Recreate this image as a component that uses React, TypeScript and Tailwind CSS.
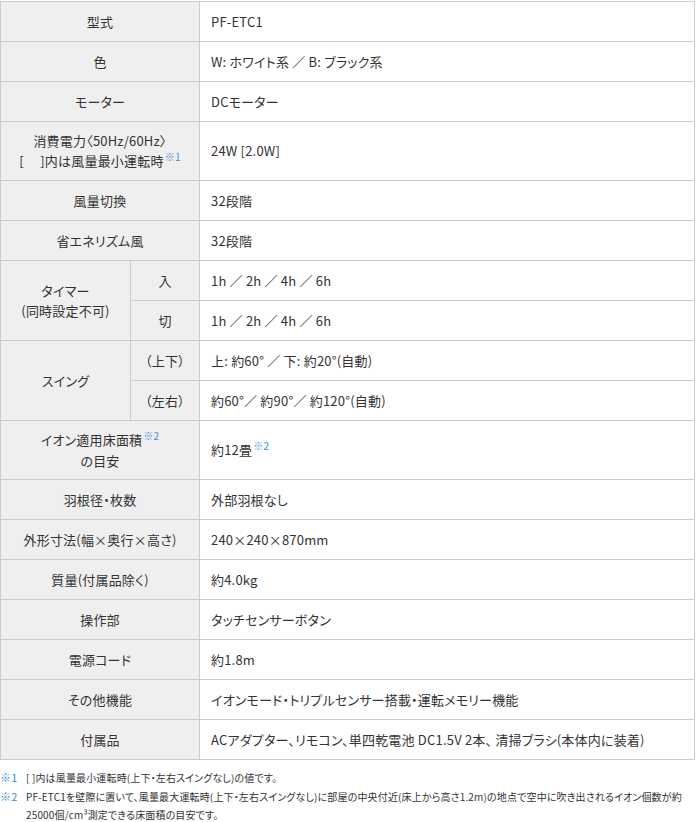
const font = { fontFamily: '"Noto Sans CJK JP", "Liberation Sans", sans-serif' };

function Note({ n }: { n: string }) {
  return <span className="relative -top-[5px] ml-px text-[10px] text-[#3b8fd6]">※{n}</span>;
}

const th = "border border-[#cccccc] bg-[#efefef] text-center align-middle font-normal px-2";
const td = "border border-[#cccccc] bg-white text-left align-middle pl-[11px] pr-2";

type Row = { label: React.ReactNode; value: React.ReactNode; tall?: boolean };

const rowsTop: Row[] = [
  { label: "型式", value: "PF-ETC1" },
  { label: "色", value: "W: ホワイト系 ／ B: ブラック系" },
  { label: "モーター", value: "DCモーター" },
  {
    label: (
      <>
        消費電力〈50Hz/60Hz〉
        <br />[　 ]内は風量最小運転時<Note n="1" />
      </>
    ),
    value: "24W [2.0W]",
    tall: true,
  },
  { label: "風量切換", value: "32段階" },
  { label: "省エネリズム風", value: "32段階" },
];

const rowsBottom: Row[] = [
  {
    label: (
      <>
        イオン適用床面積<Note n="2" />
        <br />の目安
      </>
    ),
    value: (
      <>
        約12畳<Note n="2" />
      </>
    ),
    tall: true,
  },
  { label: "羽根径・枚数", value: "外部羽根なし" },
  { label: "外形寸法(幅×奥行×高さ)", value: "240×240×870mm" },
  { label: "質量(付属品除く)", value: "約4.0kg" },
  { label: "操作部", value: "タッチセンサーボタン" },
  { label: "電源コード", value: "約1.8m" },
  { label: "その他機能", value: "イオンモード・トリプルセンサー搭載・運転メモリー機能" },
  { label: "付属品", value: "ACアダプター、リモコン、単四乾電池 DC1.5V 2本、 清掃ブラシ(本体内に装着)" },
];

function Simple({ r }: { r: Row }) {
  return (
    <tr className={r.tall ? "h-[59px]" : "h-[40px]"}>
      <th colSpan={2} className={th + " leading-[20px]"}>
        {r.label}
      </th>
      <td className={td}>{r.value}</td>
    </tr>
  );
}

export default function App() {
  return (
    <div className="w-[698px] bg-white pt-px text-[13px] leading-[18px] text-[#333333]" style={font}>
      <table className="w-[695px] border-collapse table-fixed tracking-[0.2px] [font-feature-settings:'palt']">
        <colgroup>
          <col className="w-[130px]" />
          <col className="w-[69px]" />
          <col />
        </colgroup>
        <tbody>
          {rowsTop.map((r, i) => (
            <Simple key={i} r={r} />
          ))}
          <tr className="h-[40px]">
            <th rowSpan={2} className={th + " leading-[20px]"}>
              タイマー
              <br />
              (同時設定不可)
            </th>
            <th className={th}>入</th>
            <td className={td}>1h ／ 2h ／ 4h ／ 6h</td>
          </tr>
          <tr className="h-[40px]">
            <th className={th}>切</th>
            <td className={td}>1h ／ 2h ／ 4h ／ 6h</td>
          </tr>
          <tr className="h-[40px]">
            <th rowSpan={2} className={th}>
              スイング
            </th>
            <th className={th}>（上下）</th>
            <td className={td}>上: 約60° ／ 下: 約20°(自動)</td>
          </tr>
          <tr className="h-[40px]">
            <th className={th}>（左右）</th>
            <td className={td}>約60°／ 約90°／ 約120°(自動)</td>
          </tr>
          {rowsBottom.map((r, i) => (
            <Simple key={i} r={r} />
          ))}
        </tbody>
      </table>
      <div className="mt-[8px] text-[10px] leading-[19px] tracking-[0.15px] [font-feature-settings:'palt']">
        <div className="flex">
          <span className="w-[26px] shrink-0 text-[11px] text-[#3b8fd6]">※1</span>
          <span>[ ]内は風量最小運転時(上下・左右スイングなし)の値です。</span>
        </div>
        <div className="flex">
          <span className="w-[26px] shrink-0 text-[11px] text-[#3b8fd6]">※2</span>
          <span className="leading-[18px] pt-px">
            PF-ETC1を壁際に置いて、風量最大運転時(上下・左右スイングなし)に部屋の中央付近(床上から高さ1.2m)の地点で空中に吹き出されるイオン個数が約
            <br />
            25000個/cm³測定できる床面積の目安です。
          </span>
        </div>
      </div>
    </div>
  );
}
